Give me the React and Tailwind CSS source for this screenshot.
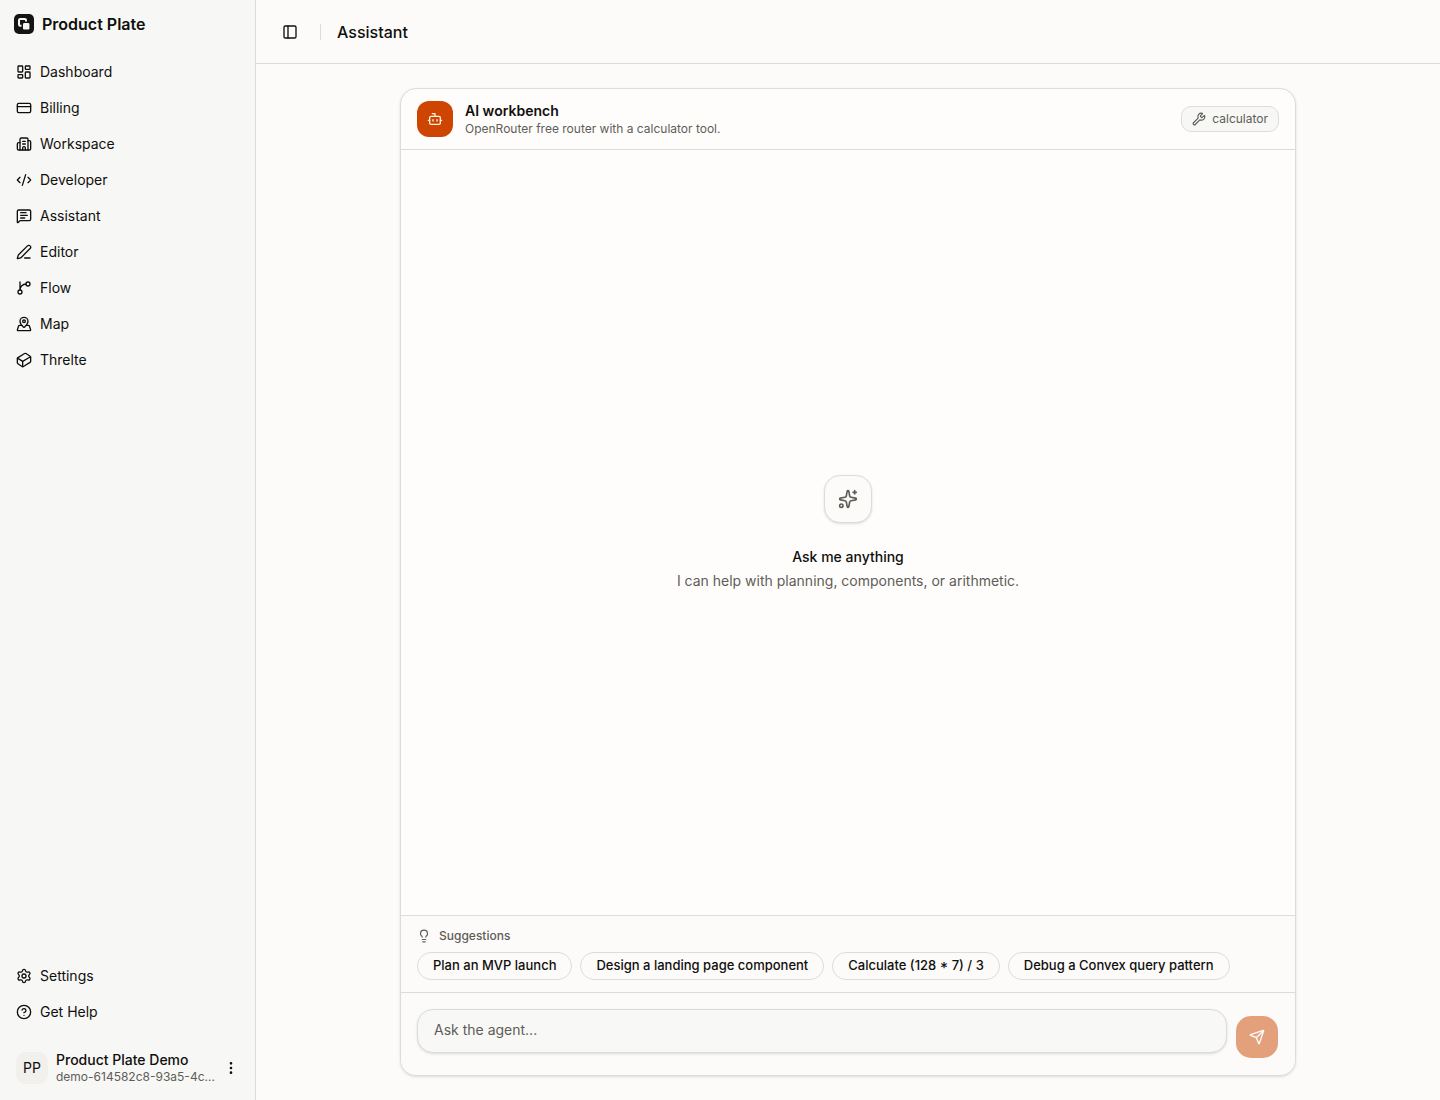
import { useState } from 'react';
import {
  Bot,
  Building2,
  CircleQuestionMark,
  CodeXml,
  CreditCard,
  EllipsisVertical,
  LayoutDashboard,
  Lightbulb,
  MapPinned,
  MessageSquareText,
  PanelLeft,
  PenLine,
  Send,
  Settings,
  Sparkles,
  Wrench,
} from 'lucide-react';

function StrokeIcon({ className, children }) {
  return (
    <svg
      viewBox="0 0 24 24"
      fill="none"
      stroke="currentColor"
      strokeWidth="2"
      strokeLinecap="round"
      strokeLinejoin="round"
      className={className}
      aria-hidden="true"
    >
      {children}
    </svg>
  );
}

function CuboidIcon({ className }) {
  return (
    <StrokeIcon className={className}>
      <path d="m21.12 6.4-6.05-4.06a2 2 0 0 0-2.17-.05L2.95 8.41a2 2 0 0 0-.95 1.7v5.82a2 2 0 0 0 .88 1.66l6.05 4.07a2 2 0 0 0 2.17.05l9.95-6.12a2 2 0 0 0 .95-1.7V8.06a2 2 0 0 0-.88-1.66Z" />
      <path d="M10 22v-8L2.25 9.15" />
      <path d="m10 14 11.77-6.87" />
    </StrokeIcon>
  );
}

function BranchIcon({ className }) {
  return (
    <StrokeIcon className={className}>
      <path d="M15 6a9 9 0 0 0-9 9V3" />
      <circle cx="18" cy="6" r="3" />
      <circle cx="6" cy="18" r="3" />
    </StrokeIcon>
  );
}

function Logo() {
  return (
    <svg viewBox="0 0 20 20" className="size-5 shrink-0" aria-hidden="true">
      <rect width="20" height="20" rx="5" fill="#141412" />
      <path
        d="M7.5 11.8H6.300a1.300 1.300 0 0 1-1.300-1.300V6.300A1.300 1.300 0 0 1 6.300 5H10.700A1.300 1.300 0 0 1 12 6.300V7.500"
        fill="none"
        stroke="#f7f7f5"
        strokeWidth="2"
      />
      <rect x="8" y="8" width="8" height="8" rx="1.500" fill="#141412" />
      <rect x="9" y="9" width="6.400" height="6.400" rx="1.200" fill="#f7f7f5" />
    </svg>
  );
}

const mainLinks = [
  { label: 'Dashboard', icon: LayoutDashboard },
  { label: 'Billing', icon: CreditCard },
  { label: 'Workspace', icon: Building2 },
  { label: 'Developer', icon: CodeXml },
  { label: 'Assistant', icon: MessageSquareText },
  { label: 'Editor', icon: PenLine },
  { label: 'Flow', icon: BranchIcon },
  { label: 'Map', icon: MapPinned },
  { label: 'Threlte', icon: CuboidIcon },
];

const footerLinks = [
  { label: 'Settings', icon: Settings },
  { label: 'Get Help', icon: CircleQuestionMark },
];

const suggestions = [
  'Plan an MVP launch',
  'Design a landing page component',
  'Calculate (128 * 7) / 3',
  'Debug a Convex query pattern',
];

function NavList({ links }) {
  return (
    <ul className="flex flex-col gap-1">
      {links.map(({ label, icon: Icon }) => (
        <li key={label}>
          <a href="#" className="flex h-8 items-center gap-2 rounded-lg px-2 text-sm hover:bg-[#efefec]">
            <Icon className="size-4 shrink-0" />
            {label}
          </a>
        </li>
      ))}
    </ul>
  );
}

function Sidebar() {
  return (
    <aside className="flex w-64 shrink-0 flex-col border-r border-[#dcdcda] bg-[#f7f7f5]">
      <a href="#" className="flex h-12 items-center gap-2 px-3.5 text-base font-semibold">
        <Logo />
        Product Plate
      </a>
      <nav className="flex flex-1 flex-col justify-between p-2">
        <NavList links={mainLinks} />
        <NavList links={footerLinks} />
      </nav>
      <div className="p-2">
        <button type="button" className="flex h-12 w-full items-center gap-2 rounded-lg p-2 text-left">
          <span className="flex size-8 shrink-0 items-center justify-center rounded-[10px] bg-[#f1f0ec] text-sm">PP</span>
          <span className="min-w-0 flex-1">
            <span className="block truncate text-sm leading-[18px] font-medium">Product Plate Demo</span>
            <span className="block text-xs whitespace-nowrap text-[#5f5d57]">demo-614582c8-93a5-4c...</span>
          </span>
          <EllipsisVertical className="size-4 shrink-0" />
        </button>
      </div>
    </aside>
  );
}

function Composer({ message, setMessage }) {
  return (
    <form className="flex items-end gap-2 p-4" onSubmit={(e) => e.preventDefault()}>
      <div className="flex-1 pb-1.5">
        <textarea
          rows={1}
          aria-label="Message"
          placeholder="Ask the agent..."
          value={message}
          onChange={(e) => setMessage(e.target.value)}
          className="block h-11 w-full resize-none rounded-2xl border border-[#dcdcda] bg-[#f8f8f6] px-4 py-2.5 text-sm shadow-sm outline-none placeholder:text-[#5f5d57]"
        />
      </div>
      <button
        type="submit"
        aria-label="Send"
        disabled={!message}
        className="flex size-11 shrink-0 items-center justify-center rounded-2xl border border-transparent bg-[#cd4500] bg-clip-padding text-white disabled:opacity-50"
      >
        <Send className="size-4" />
      </button>
    </form>
  );
}

function Workbench() {
  const [message, setMessage] = useState('');

  return (
    <section className="mx-auto flex w-full max-w-4xl flex-1 flex-col overflow-hidden rounded-2xl border border-[#dcdcda] bg-[#fefdfc] shadow-sm">
      <header className="flex items-center gap-3 border-b border-[#dcdcda] px-4 py-3">
        <span className="flex size-9 items-center justify-center rounded-xl bg-[#cd4500] text-[#fff3e0]">
          <Bot className="size-4" />
        </span>
        <div className="flex-1">
          <h2 className="text-sm font-semibold">AI workbench</h2>
          <p className="text-xs text-[#5f5d57]">OpenRouter free router with a calculator tool.</p>
        </div>
        <span className="flex h-[26px] items-center gap-1.5 rounded-[10px] border border-[#dcdcda] bg-[#f7f7f5] px-2.5 text-xs text-[#5f5d57]">
          <Wrench className="size-3.5" />
          calculator
        </span>
      </header>

      <div className="flex flex-1 flex-col items-center justify-center text-center text-sm">
        <span className="mb-6 flex size-12 items-center justify-center rounded-2xl border border-[#dcdcda] bg-[#fcfbf9] text-[#5f5d57] shadow-sm">
          <Sparkles className="size-5" />
        </span>
        <h3 className="mb-1 font-medium">Ask me anything</h3>
        <p className="text-[#5f5d57]">I can help with planning, components, or arithmetic.</p>
      </div>

      <div className="border-t border-[#dcdcda] bg-[#fcfbf9] px-4 py-3">
        <p className="mb-2 flex items-center gap-2 text-xs font-medium text-[#5f5d57]">
          <Lightbulb className="size-3.5" />
          Suggestions
        </p>
        <div className="flex flex-wrap gap-2">
          {suggestions.map((text) => (
            <button
              key={text}
              type="button"
              onClick={() => setMessage(text)}
              className="h-7 rounded-full border border-[#dcdcda] px-[15px] text-[13px] font-medium"
            >
              {text}
            </button>
          ))}
        </div>
      </div>

      <div className="border-t border-[#dcdcda] bg-[#fcfbf9]">
        <Composer message={message} setMessage={setMessage} />
      </div>
    </section>
  );
}

export default function App() {
  return (
    <div className="flex min-h-screen bg-[#fcfbf9] font-[Inter,sans-serif] text-[#0f0f0d]">
      <Sidebar />
      <main className="flex min-w-0 flex-1 flex-col">
        <header className="flex h-16 items-center border-b border-[#dcdcda] px-5">
          <button type="button" aria-label="Toggle sidebar" className="flex size-7 items-center justify-center rounded-lg">
            <PanelLeft className="size-4" />
          </button>
          <span className="mx-4 h-4 w-px bg-[#dcdcda]" />
          <h1 className="text-base font-medium">Assistant</h1>
        </header>
        <div className="flex flex-1 flex-col p-6">
          <Workbench />
        </div>
      </main>
    </div>
  );
}
